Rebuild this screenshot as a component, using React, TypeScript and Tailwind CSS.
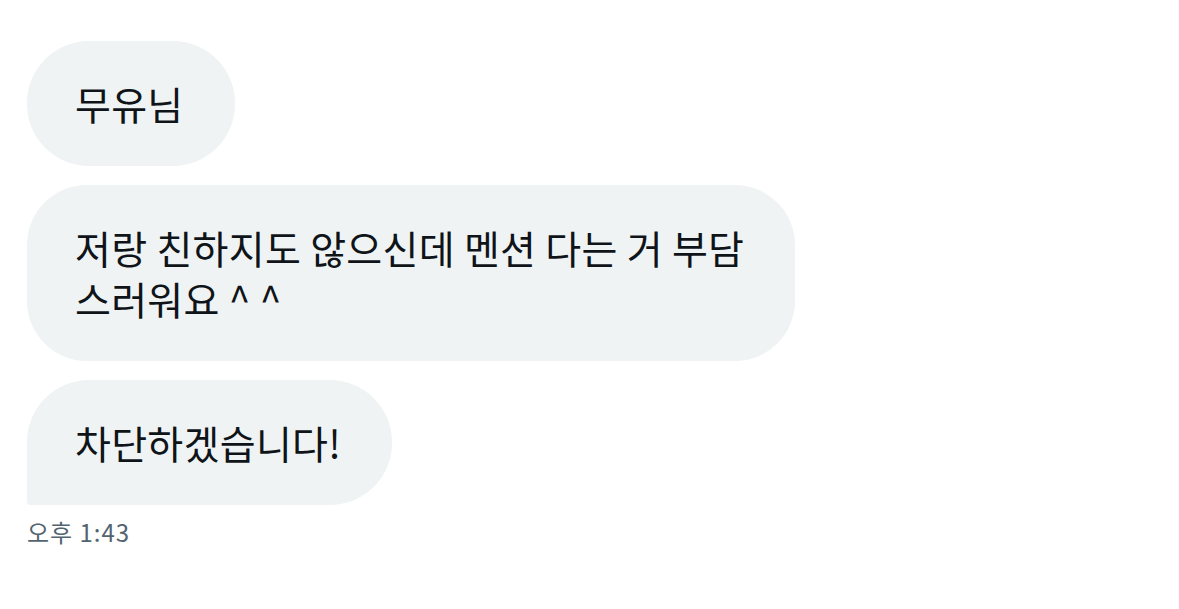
import React from 'react';

const FONT = { fontFamily: '"Noto Sans CJK KR", "Noto Sans", sans-serif' };

interface BubbleProps {
  lines: string[];
  className?: string;
}

function Bubble({ lines, className = '' }: BubbleProps) {
  return (
    <div
      className={`self-start bg-[#eff3f4] text-[#0f1419] text-[39px] tracking-[0.3px] leading-[51px] pl-[48px] pr-[51px] py-[37px] whitespace-nowrap ${className}`}
    >
      {lines.map((line, i) => (
        <div key={i}>{line}</div>
      ))}
    </div>
  );
}

export default function App() {
  return (
    <div className="w-[1179px] h-[609px] bg-white pt-[41px] pl-[27px]" style={FONT}>
      <div className="flex flex-col gap-[19px]">
        <Bubble lines={['무유님']} className="rounded-[62px]" />
        <Bubble
          lines={['저랑 친하지도 않으신데 멘션 다는 거 부담', '스러워요 ^ ^']}
          className="rounded-[60px]"
        />
        <Bubble lines={['차단하겠습니다!']} className="rounded-t-[62px] rounded-br-[62px] rounded-bl-[4px]" />
      </div>
      <p className="mt-[12px] text-[24px] tracking-[1px] leading-[30px] text-[#536471]">오후 1:43</p>
    </div>
  );
}
